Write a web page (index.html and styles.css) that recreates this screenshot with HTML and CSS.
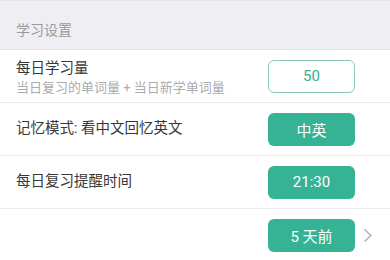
FILE: index.html
```html
<!DOCTYPE html>
<html lang="zh">
<head>
<meta charset="utf-8">
<link rel="stylesheet" href="styles.css">
</head>
<body>
<div class="page">
  <div class="section-header">学习设置</div>
  <div class="row">
    <div class="label label-two">
      <div class="title">每日学习量</div>
      <div class="sub">当日复习的单词量 + 当日新学单词量</div>
    </div>
    <div class="field outline">50</div>
    <div class="trail"></div>
  </div>
  <div class="row">
    <div class="label"><div class="title">记忆模式: 看中文回忆英文</div></div>
    <div class="field solid">中英</div>
    <div class="trail"></div>
  </div>
  <div class="row">
    <div class="label"><div class="title">每日复习提醒时间</div></div>
    <div class="field solid">21:30</div>
    <div class="trail"></div>
  </div>
  <div class="row">
    <div class="label"><div class="title"></div></div>
    <div class="field solid">5 天前</div>
    <div class="trail">
      <svg class="chev" width="10" height="15" viewBox="0 0 10 15"><path d="M1.5 1.5 L8 7.5 L1.5 13.5" fill="none" stroke="#a8a8a8" stroke-width="1.2"/></svg>
    </div>
  </div>
</div>
</body>
</html>
```
FILE: styles.css
```css
* { box-sizing: border-box; }
html, body { margin: 0; padding: 0; background: #fff; }
body { font-family: Roboto, "Noto Sans CJK SC", "Noto Sans", sans-serif; }
.page { width: 390px; height: 260px; overflow: hidden; border-top: 1px solid #e4e4e8; }
.section-header {
  height: 49px;
  background: #efeff3;
  color: #9a9a9f;
  font-size: 14px;
  line-height: 20px;
  padding: 0 16px 9px;
  display: flex;
  align-items: flex-end;
  border-bottom: 1px solid #e6e6ea;
}
.row {
  height: 53px;
  display: flex;
  align-items: center;
  padding-left: 16px;
  border-bottom: 1px solid #ececec;
}
.label { flex: 1; min-width: 0; }
.label-two { padding-top: 5px; }
.title { color: #383838; font-size: 14.5px; line-height: 18px; }
.sub { color: #ababab; font-size: 13px; line-height: 18px; margin-top: 1px; }
.field {
  width: 87px;
  height: 33px;
  border-radius: 6px;
  display: flex;
  align-items: center;
  justify-content: center;
  font-size: 15px;
}
.outline { background: #fff; border: 1px solid #86cbb8; color: #35ad8f; }
.solid { background: #35b394; color: #fff; }
.trail { width: 35px; display: flex; align-items: center; padding-left: 8px; }
.chev { display: block; }
```
